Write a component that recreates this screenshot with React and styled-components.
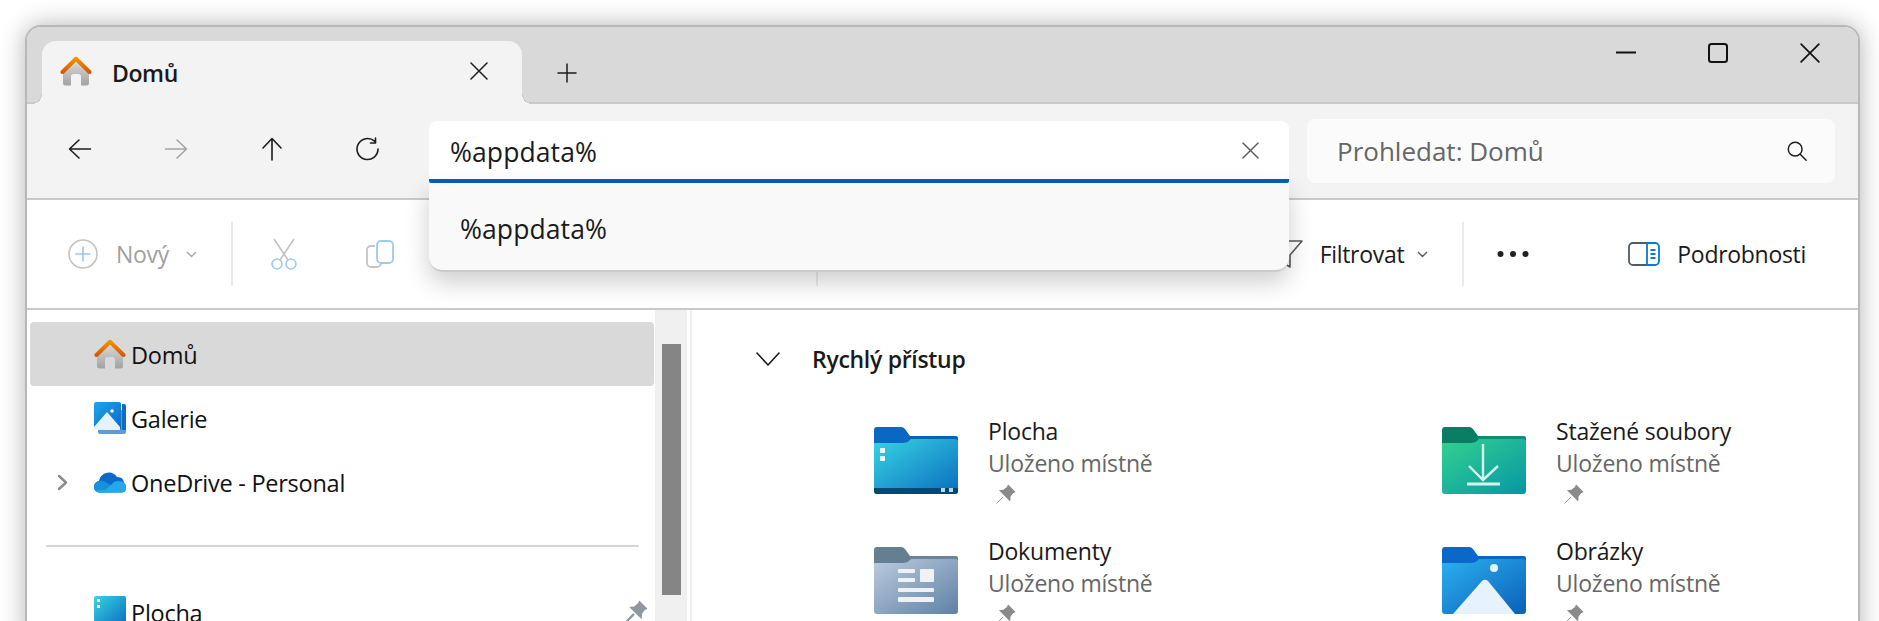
import React from 'react';
import styled, { createGlobalStyle } from 'styled-components';

const GlobalStyle = createGlobalStyle`
  html, body {
    margin: 0;
    background: #fff;
    font-family: "Open Sans", "Noto Sans", "Liberation Sans", sans-serif;
    color: #1a1a1a;
  }
`;

const Page = styled.div`
  height: 621px;
  overflow: hidden;
  padding: 25px 19px 0 25px;
  box-sizing: border-box;
`;

const Window = styled.div`
  width: 1835px;
  height: 620px;
  box-sizing: border-box;
  border: 2px solid #b8b8b8;
  border-bottom: none;
  border-radius: 16px 16px 0 0;
  box-shadow: 0 0 24px rgba(0, 0, 0, 0.3);
  background: #fff;
  display: flex;
  flex-direction: column;
`;

const TitleBar = styled.div`
  height: 77px;
  flex: none;
  display: flex;
  align-items: flex-end;
  padding-left: 15px;
  background: #d9d9d9;
  border-radius: 14px 14px 0 0;
  box-shadow: inset 0 -2px 0 #c9c9c9;
`;

const Tab = styled.div`
  position: relative;
  width: 480px;
  height: 63px;
  box-sizing: border-box;
  padding: 0 34px 3px 18px;
  display: flex;
  align-items: center;
  background: #f3f3f3;
  border-radius: 14px 14px 0 0;

  &::before, &::after {
    content: '';
    position: absolute;
    bottom: 0;
    width: 10px;
    height: 10px;
  }
  &::before {
    left: -10px;
    background: radial-gradient(circle at 0 0, transparent 9px, #c9c9c9 9px, #c9c9c9 10px, #f3f3f3 10px);
  }
  &::after {
    right: -10px;
    background: radial-gradient(circle at 100% 0, transparent 9px, #c9c9c9 9px, #c9c9c9 10px, #f3f3f3 10px);
  }
`;

const TabTitle = styled.span`
  margin-left: 20px;
  padding-top: 4px;
  font-size: 23px;
  font-weight: 600;
  line-height: 30px;
  letter-spacing: -0.4px;
  flex: 1;
`;

const NewTab = styled.div`
  margin: 0 0 21px 35px;
  height: 20px;
  display: flex;
`;

const WindowControls = styled.div`
  margin-left: auto;
  align-self: flex-start;
  display: flex;
  align-items: center;
  height: 20px;
  margin-top: 16px;
  margin-right: 38px;
  gap: 72px;
`;

const NavBar = styled.div`
  height: 79px;
  flex: none;
  padding: 15px 0 0 5px;
  display: flex;
  align-items: flex-start;
  background: #f3f3f3;
  border-bottom: 2px solid #c9c9c9;
`;

const NavButton = styled.div`
  width: 96px;
  height: 60px;
  flex: none;
  display: flex;
  align-items: center;
  justify-content: center;
  color: ${p => (p.$disabled ? '#a3a3a3' : '#1c1c1c')};
`;

const AddressWrap = styled.div`
  position: relative;
  z-index: 5;
  width: 860px;
  height: 62px;
  margin: 2px 0 0 13px;
  flex: none;
`;

const AddressBox = styled.div`
  height: 62px;
  box-sizing: border-box;
  padding: 0 30px 0 21px;
  display: flex;
  align-items: center;
  justify-content: space-between;
  background: #fff;
  border-bottom: 4px solid #0063b8;
  border-radius: 8px 8px 2px 2px;
  font-size: 26.5px;
  letter-spacing: 0.1px;
  color: #1a1a1a;
`;

const AddressText = styled.span`
  padding-top: 4px;
`;

const Suggestions = styled.div`
  position: absolute;
  left: 0;
  right: 0;
  top: 62px;
  height: 89px;
  box-sizing: border-box;
  padding: 5px 0 0 31px;
  display: flex;
  align-items: center;
  background: #f9f9f9;
  border-bottom: 2px solid #cbcbcb;
  border-radius: 0 0 14px 14px;
  box-shadow: 0 10px 24px rgba(0, 0, 0, 0.2);
  font-size: 26.5px;
  letter-spacing: 0.1px;
`;

const SearchBox = styled.div`
  width: 528px;
  height: 64px;
  margin-left: 18px;
  flex: none;
  box-sizing: border-box;
  padding: 0 27px 0 30px;
  display: flex;
  align-items: center;
  justify-content: space-between;
  background: #fbfbfb;
  border-radius: 8px;
  font-size: 26px;
  color: #666;
`;

const SearchGlyph = styled.div`
  display: flex;
  color: #1c1c1c;
`;

const CommandBar = styled.div`
  height: 108px;
  flex: none;
  padding: 0 52px 0 41px;
  display: flex;
  align-items: center;
  background: #fff;
  border-bottom: 2px solid #c9c9c9;
`;

const CommandLabel = styled.span`
  font-size: 23px;
  letter-spacing: -0.3px;
  line-height: 30px;
  margin-left: ${p => p.$gap}px;
  color: ${p => (p.$disabled ? '#a0a0a0' : '#1a1a1a')};
`;

const CommandIcon = styled.div`
  display: flex;
  flex: none;
  margin-left: ${p => p.$gap || 0}px;
  color: ${p => p.$color || '#5a5a5a'};
`;

const CommandSeparator = styled.div`
  width: 2px;
  height: 64px;
  flex: none;
  margin-left: ${p => p.$gap}px;
  background: #ebebeb;
`;

const PushRight = styled.div`
  margin-left: auto;
  display: flex;
  align-items: center;
`;

const Body = styled.div`
  flex: 1;
  min-height: 0;
  display: flex;
  overflow: hidden;
`;

const Sidebar = styled.div`
  width: 663px;
  flex: none;
  display: flex;
  border-right: 2px solid #eee;
  box-sizing: content-box;
`;

const Tree = styled.div`
  width: 624px;
  flex: none;
  padding: 12px 1px 0 3px;
`;

const TreeRow = styled.div`
  height: 64px;
  box-sizing: border-box;
  padding: 0 6px 0 27px;
  display: flex;
  align-items: center;
  border-radius: 4px;
  background: ${p => (p.$selected ? '#d9d9d9' : 'transparent')};
  font-size: 23.5px;
  letter-spacing: -0.25px;
  color: #111;
`;

const TreeLabel = styled.span`
  padding-top: 2px;
`;

const Expander = styled.div`
  width: 37px;
  flex: none;
  display: flex;
  color: #8a8a8a;
`;

const TreeIcon = styled.div`
  width: 32px;
  margin-right: 5px;
  flex: none;
  display: flex;
`;

const TreePin = styled.div`
  margin-left: auto;
  display: flex;
  align-self: flex-start;
  margin-top: 20px;
  color: #8d989f;
`;

const TreeDivider = styled.div`
  height: 2px;
  margin: 31px 15px 33px 16px;
  background: #d6d6d6;
`;

const ScrollTrack = styled.div`
  width: 32px;
  flex: none;
  box-sizing: border-box;
  padding: 34px 6px 0 7px;
  background: #f0f0f0;
`;

const ScrollThumb = styled.div`
  height: 251px;
  background: #858585;
`;

const Content = styled.div`
  flex: 1;
  padding: 24px 0 0 64px;
`;

const SectionHeader = styled.div`
  height: 50px;
  margin-bottom: 32px;
  display: flex;
  align-items: center;
  gap: 32px;
  font-size: 23px;
  font-weight: 600;
  letter-spacing: -0.3px;
`;

const Grid = styled.div`
  display: grid;
  grid-template-columns: 568px 1fr;
  grid-auto-rows: 120px;
  padding-left: 118px;
`;

const Item = styled.div`
  display: flex;
  gap: 30px;
`;

const ItemIcon = styled.div`
  margin-top: 11px;
  display: flex;
  flex: none;
`;

const ItemText = styled.div`
  display: flex;
  flex-direction: column;
  margin-top: -1px;
`;

const ItemName = styled.div`
  font-size: 23px;
  line-height: 32px;
  letter-spacing: -0.2px;
  color: #1a1a1a;
`;

const ItemNote = styled.div`
  font-size: 23px;
  line-height: 32px;
  letter-spacing: -0.2px;
  color: #666;
`;

const ItemPin = styled.div`
  margin: 5px 0 0 8px;
  display: flex;
  color: #8a8a8a;
`;

const line = { fill: 'none', stroke: 'currentColor', strokeWidth: 1.6, strokeLinecap: 'round', strokeLinejoin: 'round' };

const Line = ({ size = 24, children }) => (
  <svg width={size} height={size} viewBox="0 0 24 24" {...line}>{children}</svg>
);

const XIcon = ({ size = 18, color = '#1c1c1c' }) => (
  <svg width={size} height={size} viewBox="0 0 18 18" fill="none" stroke={color} strokeWidth="1.5" strokeLinecap="round">
    <path d="M1 1l16 16M17 1L1 17" />
  </svg>
);

const HomeIcon = ({ id }) => (
  <svg width="32" height="30" viewBox="0 0 32 30">
    <defs>
      <linearGradient id={`${id}b`} x1="0" y1="0" x2="0" y2="1">
        <stop offset="0" stopColor="#dcdcdc" />
        <stop offset="1" stopColor="#a2a2a2" />
      </linearGradient>
      <linearGradient id={`${id}r`} x1="0" y1="0" x2="0" y2="1">
        <stop offset="0" stopColor="#f39200" />
        <stop offset="1" stopColor="#d9570a" />
      </linearGradient>
    </defs>
    <path fill={`url(#${id}b)`} d="M3 14L16 4l13 10v13a2.500 2.500 0 0 1-2.500 2.500H21V21a3 3 0 0 0-3-3h-4a3 3 0 0 0-3 3v8.500H5.500A2.500 2.500 0 0 1 3 27z" />
    <path fill="none" stroke={`url(#${id}r)`} strokeWidth="4" strokeLinecap="round" strokeLinejoin="round" d="M2.500 16L16 2.800 29.500 16" />
  </svg>
);

const GalleryIcon = () => (
  <svg width="32" height="32" viewBox="0 0 32 32">
    <defs>
      <linearGradient id="gal" x1="0" y1="0" x2="1" y2="1">
        <stop offset="0" stopColor="#1fa6ea" />
        <stop offset="1" stopColor="#0a68c4" />
      </linearGradient>
    </defs>
    <path fill="#5f9bd6" d="M4 8h28v22a2 2 0 0 1-2 2H6a2 2 0 0 1-2-2z" />
    <path fill="#0f6cc0" d="M28 2h2a2 2 0 0 1 2 2v24h-4z" />
    <rect x="0" y="0" width="27" height="28" rx="2" fill="url(#gal)" />
    <path fill="#e6f2fd" d="M0 25L13 10l13 15v3H0z" />
    <circle cx="18" cy="9" r="1.800" fill="#fff" />
  </svg>
);

const CloudIcon = () => (
  <svg width="32" height="21" viewBox="0 0 32 21">
    <path fill="#0a6cc8" d="M6 20.500C2.500 20.500 0 18 0 15c0-3 2-5.500 5-6C6 4 10 .5 15 .5c3.500 0 6 1.500 8 4.500 5 0 7 3 7 6 2 1 2 4 2 5.500 0 2.500-2 4-4 4z" />
    <path fill="#1490df" d="M0 15c0-3 2-5.500 5-6 3-.5 5 0 8 2l7 4-10 5.500H6C2.500 20.500 0 18 0 15z" />
    <path fill="#28a8ea" d="M9 20.500L20 10c4-2 9-1 10 1 2 1 2 4 2 5.500 0 2.500-2 4-4 4z" />
    <path fill="#28a8ea" d="M2 18.500l12-1 6 3H6c-1.500 0-3-.8-4-2z" />
  </svg>
);

const MiniDesktop = () => (
  <svg width="32" height="32" viewBox="0 0 32 32">
    <defs>
      <linearGradient id="mini" x1="0" y1="0" x2="1" y2="1">
        <stop offset="0" stopColor="#38d4e2" />
        <stop offset="1" stopColor="#0a6cc0" />
      </linearGradient>
    </defs>
    <rect width="32" height="30" rx="2" fill="url(#mini)" />
    <rect x="3" y="3" width="3" height="3" fill="#fff" />
    <rect x="3" y="9" width="3" height="3" fill="#fff" />
  </svg>
);

const Pin = ({ size = 20, needle = 1 }) => (
  <svg width={size} height={size} viewBox="0 0 24 24" fill="currentColor">
    <path d="M14.500.5l9 9-3 1.500-3 4-.5 6L3.500 7.500 9 7l4-3.500z" />
    <path d="M8 16L.8 23.200" stroke="currentColor" strokeWidth={needle} strokeLinecap="round" />
  </svg>
);

const folderSkins = {
  desktop: { tab: '#0a68c4', back: '#0a62b4', from: '#38d4e2', to: '#0a6cc0' },
  download: { tab: '#0a7d62', back: '#0f8e74', from: '#34d18f', to: '#0597a5' },
  documents: { tab: '#647f8f', back: '#6b8499', from: '#bccbdc', to: '#5f81a6' },
  pictures: { tab: '#0a68c8', back: '#0a66c0', from: '#2cb0f0', to: '#0a60b8' },
};

const Folder = ({ kind }) => {
  const skin = folderSkins[kind];
  return (
    <svg width="84" height="67" viewBox="0 0 84 67">
      <defs>
        <linearGradient id={kind} x1="0" y1="0" x2="1" y2="1">
          <stop offset="0" stopColor={skin.from} />
          <stop offset="1" stopColor={skin.to} />
        </linearGradient>
      </defs>
      <path fill={skin.tab} d="M0 3a3 3 0 0 1 3-3h24a5 5 0 0 1 4 2l5 7h45a3 3 0 0 1 3 3v6H0z" />
      <path fill={skin.back} d="M36 9h45a3 3 0 0 1 3 3v4H36z" />
      <path fill={`url(#${kind})`} d="M0 16h29c3 0 5-1 7-3l1-1h44a3 3 0 0 1 3 3v49a3 3 0 0 1-3 3H3a3 3 0 0 1-3-3z" />
      {kind === 'desktop' && (
        <>
          <path fill="#03486f" d="M0 61h84v3a3 3 0 0 1-3 3H3a3 3 0 0 1-3-3z" />
          <rect x="6" y="21" width="5" height="5" fill="#e8fbff" />
          <rect x="6" y="29" width="5" height="5" fill="#e8fbff" />
          <rect x="67" y="61" width="4" height="4" fill="#b9dbe6" />
          <rect x="75" y="61" width="4" height="4" fill="#b9dbe6" />
        </>
      )}
      {kind === 'download' && (
        <g fill="none" stroke="#d8f5ec" strokeWidth="2.400">
          <path d="M41 17v36M27 39l14 14 15-14" />
          <path d="M25 57h33" strokeWidth="3" />
        </g>
      )}
      {kind === 'documents' && (
        <g fill="#eef2f7">
          <rect x="24" y="22" width="17" height="4" rx="1" />
          <rect x="24" y="31" width="17" height="4" rx="1" />
          <rect x="46" y="22" width="14" height="13" rx="1" />
          <rect x="24" y="41" width="36" height="4" rx="1" />
          <rect x="24" y="50" width="36" height="5" rx="1" />
        </g>
      )}
      {kind === 'pictures' && (
        <>
          <circle cx="52" cy="21" r="4" fill="#e6f3fd" />
          <path fill="#e6f2fd" d="M11 67l29-33a4 4 0 0 1 6 0l27 33z" />
        </>
      )}
    </svg>
  );
};

const items = [
  { name: 'Plocha', kind: 'desktop' },
  { name: 'Stažené soubory', kind: 'download' },
  { name: 'Dokumenty', kind: 'documents' },
  { name: 'Obrázky', kind: 'pictures' },
];

const App = () => (
  <Page>
    <GlobalStyle />
    <Window>
      <TitleBar>
        <Tab>
          <HomeIcon id="tabhome" />
          <TabTitle>Domů</TabTitle>
          <XIcon />
        </Tab>
        <NewTab>
          <svg width="20" height="20" viewBox="0 0 20 20" fill="none" stroke="#1c1c1c" strokeWidth="1.5" strokeLinecap="round">
            <path d="M10 1v18M1 10h18" />
          </svg>
        </NewTab>
        <WindowControls>
          <svg width="20" height="20" viewBox="0 0 20 20"><rect y="8.500" width="20" height="2" fill="#111" /></svg>
          <svg width="20" height="20" viewBox="0 0 20 20" fill="none" stroke="#111" strokeWidth="2"><rect x="1" y="1" width="18" height="18" rx="2.500" /></svg>
          <XIcon size={20} color="#111" />
        </WindowControls>
      </TitleBar>

      <NavBar>
        <NavButton>
          <Line><path d="M22.500 12H2M11 3l-9.500 9 9.500 9" /></Line>
        </NavButton>
        <NavButton $disabled>
          <Line><path d="M1.500 12H22M13 3l9.500 9-9.500 9" /></Line>
        </NavButton>
        <NavButton>
          <Line><path d="M12 23V2M3 11l9-9.500 9 9.500" /></Line>
        </NavButton>
        <NavButton>
          <Line><path d="M22 12a10.500 10.500 0 1 1-3.500-7.800M19.500 1v5h-5" /></Line>
        </NavButton>
        <AddressWrap>
          <AddressBox>
            <AddressText>%appdata%</AddressText>
            <XIcon size={17} color="#5a5a5a" />
          </AddressBox>
          <Suggestions>%appdata%</Suggestions>
        </AddressWrap>
        <SearchBox>
          <span>Prohledat: Domů</span>
          <SearchGlyph>
            <Line size={22}>
              <circle cx="10" cy="10" r="7.500" />
              <path d="M15.500 15.500L22 22" />
            </Line>
          </SearchGlyph>
        </SearchBox>
      </NavBar>

      <CommandBar>
        <svg width="30" height="30" viewBox="0 0 30 30" fill="none" strokeWidth="1.600" strokeLinecap="round">
          <circle cx="15" cy="15" r="14" stroke="#c4c4c4" />
          <path d="M15 8v14M8 15h14" stroke="#9cc8ec" />
        </svg>
        <CommandLabel $gap={18} $disabled>Nový</CommandLabel>
        <CommandIcon $gap={17} $color="#a8a8a8">
          <svg width="11" height="7" viewBox="0 0 11 7" fill="none" stroke="currentColor" strokeWidth="1.400"><path d="M1 1l4.500 4.500L10 1" /></svg>
        </CommandIcon>
        <CommandSeparator $gap={34} />
        <CommandIcon $gap={37}>
          <svg width="28" height="32" viewBox="0 0 28 32" fill="none" strokeWidth="1.600">
            <path d="M4 1l14 21M24 1L10 22" stroke="#c2c2c2" />
            <circle cx="7" cy="26" r="5" stroke="#9ccbee" />
            <circle cx="21" cy="26" r="5" stroke="#9ccbee" />
          </svg>
        </CommandIcon>
        <CommandIcon $gap={68}>
          <svg width="28" height="28" viewBox="0 0 28 28" fill="none" strokeWidth="1.800">
            <path d="M9 6H5a4 4 0 0 0-4 4v13a4 4 0 0 0 4 4h6a4 4 0 0 0 4-4" stroke="#c4c4c4" />
            <rect x="11" y="1" width="16" height="22" rx="4" stroke="#9ccbee" />
          </svg>
        </CommandIcon>
        <CommandSeparator $gap={422} />
        <PushRight>
          <CommandIcon>
            <svg width="34" height="29" viewBox="0 0 34 29" fill="none" stroke="currentColor" strokeWidth="1.600" strokeLinejoin="round">
              <path d="M1 1h32L21 15v12l-5-3v-9z" />
            </svg>
          </CommandIcon>
          <CommandLabel $gap={17}>Filtrovat</CommandLabel>
          <CommandIcon $gap={13} $color="#5a5a5a">
            <svg width="11" height="7" viewBox="0 0 11 7" fill="none" stroke="currentColor" strokeWidth="1.400"><path d="M1 1l4.500 4.500L10 1" /></svg>
          </CommandIcon>
          <CommandSeparator $gap={34} />
          <CommandIcon $gap={33} $color="#222">
            <svg width="32" height="8" viewBox="0 0 32 8" fill="currentColor">
              <circle cx="3.500" cy="4" r="3" />
              <circle cx="16" cy="4" r="3" />
              <circle cx="28.500" cy="4" r="3" />
            </svg>
          </CommandIcon>
          <CommandIcon $gap={99}>
            <svg width="32" height="24" viewBox="0 0 32 24" fill="none" strokeWidth="1.800">
              <path d="M19 1H5a4 4 0 0 0-4 4v14a4 4 0 0 0 4 4h14" stroke="#4f5b66" />
              <path d="M19 1h8a4 4 0 0 1 4 4v14a4 4 0 0 1-4 4h-8z" stroke="#0a78d4" />
              <path d="M22.500 8h5M22.500 12h5M22.500 16h5" stroke="#0a78d4" />
            </svg>
          </CommandIcon>
          <CommandLabel $gap={17}>Podrobnosti</CommandLabel>
        </PushRight>
      </CommandBar>

      <Body>
        <Sidebar>
          <Tree>
            <TreeRow $selected>
              <Expander />
              <TreeIcon><HomeIcon id="treehome" /></TreeIcon>
              <TreeLabel>Domů</TreeLabel>
            </TreeRow>
            <TreeRow>
              <Expander />
              <TreeIcon><GalleryIcon /></TreeIcon>
              <TreeLabel>Galerie</TreeLabel>
            </TreeRow>
            <TreeRow>
              <Expander>
                <svg width="11" height="17" viewBox="0 0 11 17" fill="none" stroke="currentColor" strokeWidth="2.400" strokeLinecap="round" strokeLinejoin="round"><path d="M2 2l7 6.500L2 15" /></svg>
              </Expander>
              <TreeIcon><CloudIcon /></TreeIcon>
              <TreeLabel>OneDrive - Personal</TreeLabel>
            </TreeRow>
            <TreeDivider />
            <TreeRow>
              <Expander />
              <TreeIcon><MiniDesktop /></TreeIcon>
              <TreeLabel>Plocha</TreeLabel>
              <TreePin><Pin size={22} needle={2.5} /></TreePin>
            </TreeRow>
          </Tree>
          <ScrollTrack><ScrollThumb /></ScrollTrack>
        </Sidebar>
        <Content>
          <SectionHeader>
            <svg width="24" height="14" viewBox="0 0 24 14" fill="none" stroke="#1c1c1c" strokeWidth="1.600" strokeLinecap="round" strokeLinejoin="round">
              <path d="M1 1l11 12L23 1" />
            </svg>
            Rychlý přístup
          </SectionHeader>
          <Grid>
            {items.map(item => (
              <Item key={item.kind}>
                <ItemIcon><Folder kind={item.kind} /></ItemIcon>
                <ItemText>
                  <ItemName>{item.name}</ItemName>
                  <ItemNote>Uloženo místně</ItemNote>
                  <ItemPin><Pin /></ItemPin>
                </ItemText>
              </Item>
            ))}
          </Grid>
        </Content>
      </Body>
    </Window>
  </Page>
);

export default App;
